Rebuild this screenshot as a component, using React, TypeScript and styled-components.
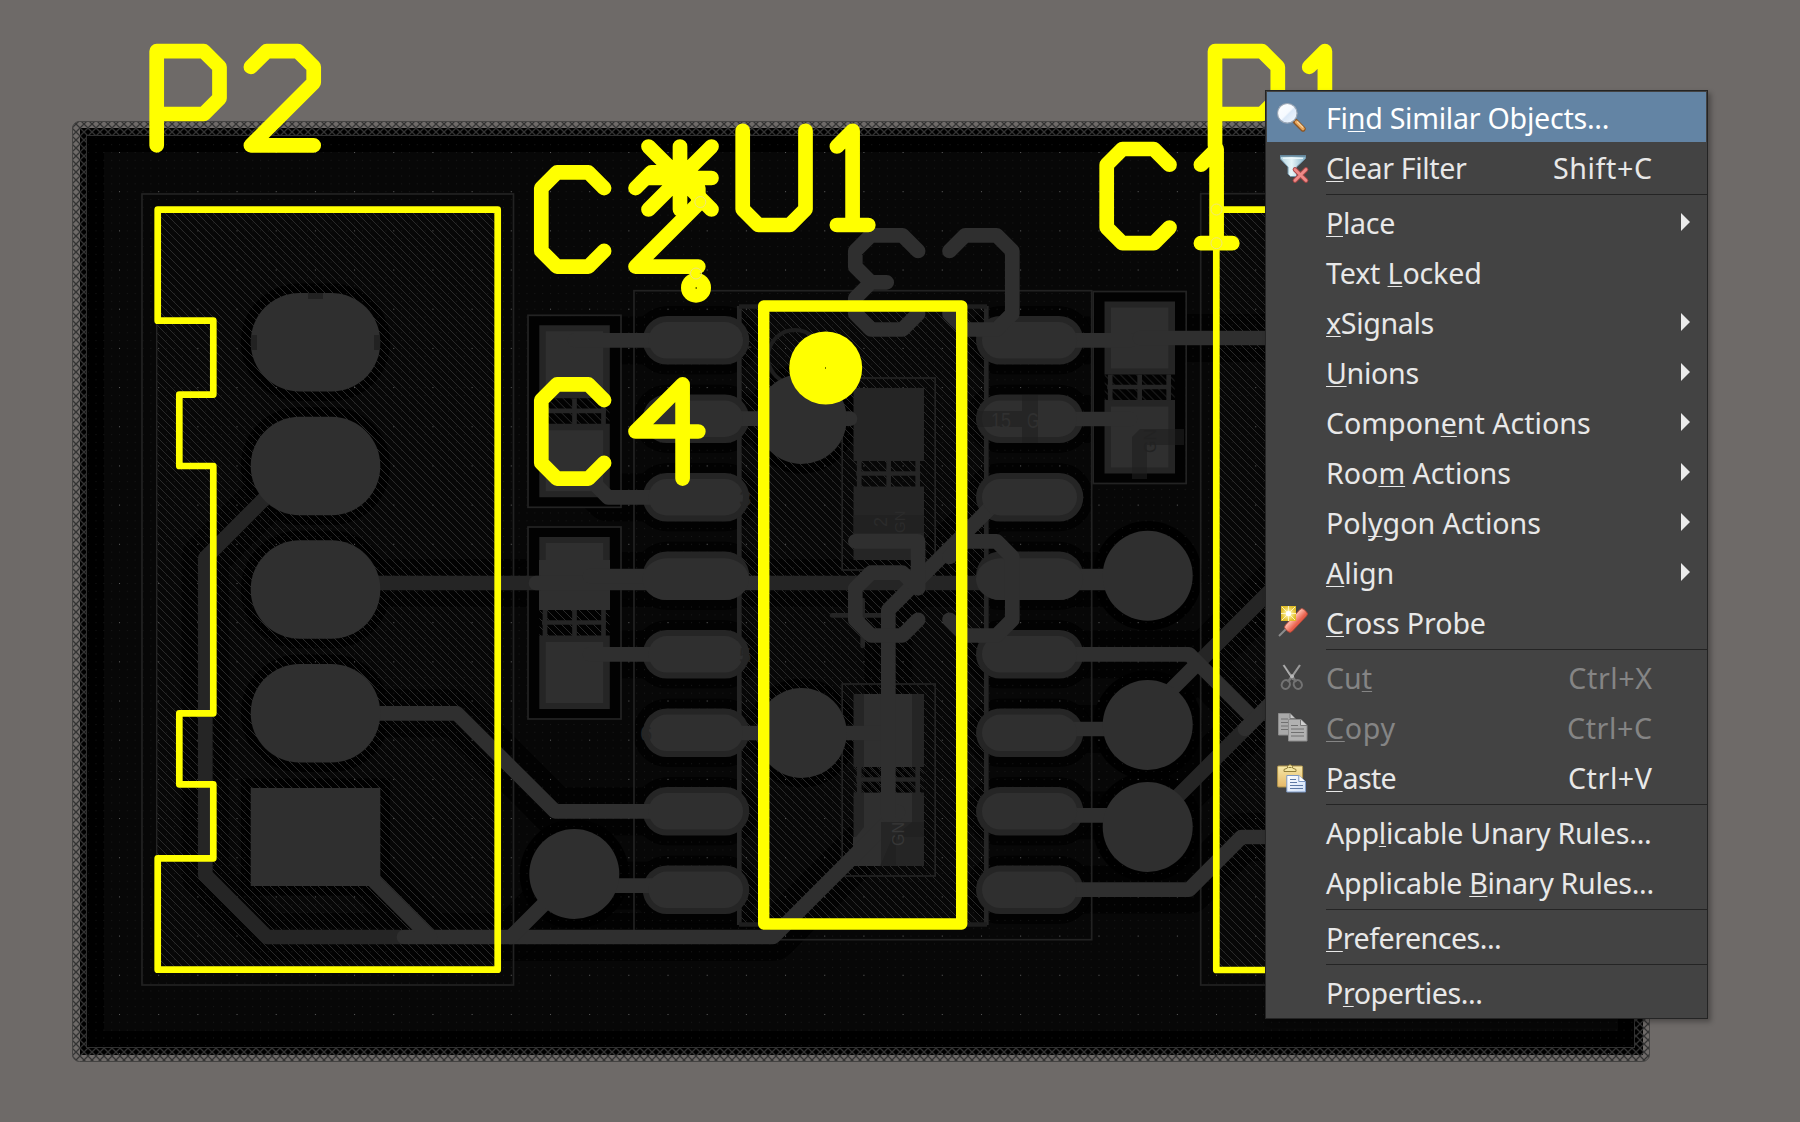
import React from "react";
import styled, { createGlobalStyle } from "styled-components";

const Global = createGlobalStyle`
  * { box-sizing: border-box; }
  body { margin: 0; background: #6e6a68; overflow: hidden; }
`;

const Screen = styled.main`
  position: relative;
  width: 1800px;
  height: 1122px;
  overflow: hidden;
  background: #6e6a68;
`;

const Board = styled.svg`
  display: block;
  width: 1800px;
  height: 1122px;
`;

const Menu = styled.ul`
  position: absolute;
  left: 1265px;
  top: 90px;
  width: 443px;
  margin: 0;
  padding: 1px 0;
  list-style: none;
  display: flex;
  flex-direction: column;
  background: #434343;
  border: 1px solid #242424;
  box-shadow: 3px 3px 5px rgba(0, 0, 0, 0.3);
  font-family: "Noto Sans", "Open Sans", sans-serif;
  font-size: 28.6px;
`;

const Row = styled.li<{ $active?: boolean; $disabled?: boolean }>`
  display: grid;
  grid-template-columns: 51px 1fr auto 54px;
  align-items: center;
  height: 50px;
  margin: 0 1px;
  padding-left: 8px;
  line-height: 50px;
  white-space: nowrap;
  color: ${(p) => (p.$active ? "#fff" : p.$disabled ? "#858585" : "#e8e8e8")};
  background: ${(p) => (p.$active ? "#6384a4" : "transparent")};
`;

const IconCell = styled.span`
  display: flex;
  align-items: center;
  height: 50px;
`;

const Glyph = styled.svg`
  width: 32px;
  height: 32px;
  overflow: visible;
`;

const Label = styled.span<{ $track: number }>`
  letter-spacing: ${(p) => p.$track}px;
  position: relative;
  top: 1px;
`;

const Key = styled.u`
  text-decoration: underline;
  text-decoration-thickness: 1px;
  text-underline-offset: 2px;
  text-decoration-skip-ink: none;
`;

const Shortcut = styled.span`
  position: relative;
  top: 1px;
  letter-spacing: 0.6px;
  margin-right: -0.6px;
`;

const Arrow = styled.span`
  grid-column: 4;
  justify-self: start;
  margin-left: 29px;
  border-left: 9px solid #ececec;
  border-top: 9px solid transparent;
  border-bottom: 9px solid transparent;
`;

const Divider = styled.li`
  height: 5px;
  margin-left: 60px;
  padding-top: 2px;
  &::before {
    content: "";
    display: block;
    height: 1px;
    background: #242424;
  }
`;

const Find = () => (
  <Glyph viewBox="0 0 32 32">
    <defs>
      <linearGradient id="lens" x1="0" y1="0" x2="1" y2="1">
        <stop offset="0" stopColor="#ffffff" />
        <stop offset=".5" stopColor="#f6faff" />
        <stop offset=".55" stopColor="#dce9f8" />
        <stop offset="1" stopColor="#f4f9ff" />
      </linearGradient>
    </defs>
    <path d="M20.5 20.5 28 28" stroke="#8a5524" strokeWidth="5.4" strokeLinecap="round" />
    <path d="M21.5 21 28 27.6" stroke="#e9a55a" strokeWidth="3.4" strokeLinecap="round" />
    <path d="m22 20.5 6 6" stroke="#f8d29c" strokeWidth="1.2" />
    <circle cx="12.3" cy="12.3" r="9.8" fill="url(#lens)" stroke="#9aa6b4" strokeWidth="1.2" />
  </Glyph>
);

const Filter = () => (
  <Glyph viewBox="0 0 32 32">
    <defs>
      <linearGradient id="funnel">
        <stop offset="0" stopColor="#b5d6e2" />
        <stop offset=".45" stopColor="#e6f5f8" />
        <stop offset="1" stopColor="#84b2c8" />
      </linearGradient>
    </defs>
    <path d="M5.5 4.5h25v3L21.5 16v9.5h-6l-2.5-2.5V16L5.5 8z" fill="url(#funnel)" stroke="#7295ab" />
    <path d="M5.5 5h25" stroke="#5f8298" strokeWidth="1.6" />
    <path d="M8 7.3h20" stroke="#eef9fb" strokeWidth="1.2" />
    <path d="m20 18.5 11 11m0-11-11 11" stroke="#a94747" strokeWidth="4.6" strokeLinecap="round" />
    <path d="m20 18.5 11 11m0-11-11 11" stroke="#ee8a88" strokeWidth="2.8" strokeLinecap="round" />
  </Glyph>
);

const Probe = () => (
  <Glyph viewBox="0 0 32 32">
    <defs>
      <linearGradient id="grip" x1="0" y1="0" x2="1" y2="0">
        <stop offset=".1" stopColor="#ffb8a8" />
        <stop offset=".8" stopColor="#e8604c" />
      </linearGradient>
      <radialGradient id="spark">
        <stop offset="0" stopColor="#fff" />
        <stop offset=".5" stopColor="#f6e27a" />
        <stop offset="1" stopColor="#e0bd28" />
      </radialGradient>
    </defs>
    <path d="m4 30 7-7" stroke="#8c8c8c" strokeWidth="2" />
    <rect x="-4.6" y="-13.5" width="9.2" height="27" rx="3" transform="translate(21 14.5) rotate(43)" fill="url(#grip)" stroke="#b04434" strokeWidth=".8" />
    <rect x="6" y="0" width="15" height="15" fill="url(#spark)" />
    <path d="M13.5 0v15M6 7.5h15M7 1l13 13M20 1 7 14" stroke="#fff8c8" strokeWidth=".9" />
    <circle cx="13.5" cy="7.5" r="2.6" fill="#fff" />
  </Glyph>
);

const Cut = () => (
  <Glyph viewBox="0 0 32 32" fill="none">
    <path d="M8.5 4 18.5 18.5M25 4 15 18.5" stroke="#999" strokeWidth="2.2" />
    <path d="m9 4.5 6 10" stroke="#bbb" strokeWidth=".8" />
    <path d="m17 15-4 6m4-6 4 6" stroke="#777" strokeWidth="2.5" />
    <ellipse cx="10.8" cy="23.5" rx="4" ry="4.5" stroke="#737373" strokeWidth="2" transform="rotate(25 10.8 23.5)" />
    <ellipse cx="22.8" cy="23.5" rx="4" ry="4.5" stroke="#737373" strokeWidth="2" transform="rotate(-25 22.8 23.5)" />
    <circle cx="17" cy="15.3" r="2" fill="#b8b8b8" />
  </Glyph>
);

const Copy = () => (
  <Glyph viewBox="0 0 32 32" strokeWidth="1">
    <path d="M3.500 2.500H15l5 5v16.500H3.500z" fill="#a9a9a9" stroke="#8c8c8c" />
    <path d="M15 2.500v5h5" fill="#c9c9c9" stroke="#777" />
    <path d="M6 8h7M6 11.500h8M6 15h8M6 18.500h8" stroke="#707070" />
    <path d="M13.500 8.500H26l6 6v15.500H13.500z" fill="#b1b1b1" stroke="#8c8c8c" />
    <path d="M25.500 8.500v6H32" fill="#d0d0d0" stroke="#777" />
    <path d="M16 14.500h7M16 18h13M16 21.500h13M16 25h13" stroke="#707070" />
  </Glyph>
);

const Paste = () => (
  <Glyph viewBox="0 0 32 32">
    <defs>
      <linearGradient id="clip" x2="0" y2="1">
        <stop offset="0" stopColor="#f6e8a8" />
        <stop offset="1" stopColor="#e6b868" />
      </linearGradient>
      <linearGradient id="sheet" x2="1" y2="1">
        <stop offset="0" stopColor="#fff" />
        <stop offset="1" stopColor="#cfe0f8" />
      </linearGradient>
    </defs>
    <rect x="2.6" y="5" width="25" height="21" rx="1" fill="url(#clip)" stroke="#b0944c" />
    <path d="M9 10.500v-2l3.500-1.500V5.500Q15 2 17.500 5.500V7L21 8.500v2z" fill="#f3e5a2" stroke="#94803c" />
    <path d="M13.500 6.500h3" stroke="#94803c" />
    <path d="M11.800 14.500h12l6.700 6v10.500H11.800z" fill="url(#sheet)" stroke="#7c98c4" />
    <path d="M23.800 14.500v6h6.500" fill="#fff" stroke="#7c98c4" />
    <path d="M15 18.500h6M15 21.500h7M15 24.500h13M15 27.500h13" stroke="#5f7aa5" />
  </Glyph>
);

type Entry =
  | "divider"
  | {
      label: [string, string, string];
      icon?: React.ReactNode;
      shortcut?: string;
      sub?: boolean;
      active?: boolean;
      disabled?: boolean;
      track?: number;
    };

const entries: Entry[] = [
  { label: ["Fi", "n", "d Similar Objects..."], icon: <Find />, active: true, track: -0.25 },
  { label: ["", "C", "lear Filter"], icon: <Filter />, shortcut: "Shift+C", track: -0.36 },
  "divider",
  { label: ["", "P", "lace"], sub: true, track: -0.3 },
  { label: ["Text ", "L", "ocked"], track: -0.16 },
  { label: ["", "x", "Signals"], sub: true, track: -0.35 },
  { label: ["", "U", "nions"], sub: true, track: -0.3 },
  { label: ["Compon", "e", "nt Actions"], sub: true },
  { label: ["Roo", "m", " Actions"], sub: true },
  { label: ["Pol", "y", "gon Actions"], sub: true },
  { label: ["", "A", "lign"], sub: true },
  { label: ["", "C", "ross Probe"], icon: <Probe />, track: -0.1 },
  "divider",
  { label: ["Cu", "t", ""], icon: <Cut />, shortcut: "Ctrl+X", disabled: true },
  { label: ["", "C", "opy"], icon: <Copy />, shortcut: "Ctrl+C", disabled: true, track: 0.7 },
  { label: ["", "P", "aste"], icon: <Paste />, shortcut: "Ctrl+V", track: -0.7 },
  "divider",
  { label: ["App", "l", "icable Unary Rules..."], track: -0.2 },
  { label: ["Applicable ", "B", "inary Rules..."], track: -0.3 },
  "divider",
  { label: ["", "P", "references..."], track: -0.5 },
  "divider",
  { label: ["P", "r", "operties..."], track: -0.42 },
];

const HI = "#2f2f2f";
const LO = "#252525";
const U = 15.7;

/* Stroke font on a 4 x 6 grid */
const font: Record<string, string> = {
  P: "M0 6V0H3L4 1V3L3 4H0",
  "1": "M0 1L1 0V6M0 6H2",
  "2": "M0 1L1 0H3L4 1V2L0 6H4",
  "3": "M0 1L1 0H3L4 1V2L3 3H2M3 3L4 4V5L3 6H1L0 5",
  "4": "M3 6V0L0 3H4",
  "5": "M4 0H0V3L1 2H3L4 3V5L3 6H1L0 5",
  C: "M4 1L3 0H1L0 1V5L1 6H3L4 5",
  U: "M0 0V5L1 6H3L4 5V0",
};

const Designator = ({ text, x, y, mirror, color = "#ff0" }: { text: string; x: number; y: number; mirror?: boolean; color?: string }) => (
  <g
    transform={`translate(${x} ${y}) scale(${mirror ? -U : U} ${U})`}
    fill="none"
    stroke={color}
    strokeWidth={14.7 / U}
    strokeLinecap="round"
    strokeLinejoin="round"
  >
    {[...text].map((c, i) => (
      <path key={i} d={font[c]} transform={`translate(${i * 6} 0)`} />
    ))}
  </g>
);

const tracks: [string, string, number?][] = [
  ["M268 495L205.300 558V875L267 937H400", LO],
  ["M404 937H773L898 812", HI],
  ["M371 878L430 937", HI],
  ["M511 937L574 874", HI],
  ["M340 713.300H456.700L555 811.300H660", HI],
  ["M574 885.700H670", HI],
  ["M340 583H540", LO],
  ["M536 583H770", HI],
  ["M590 576H680", HI],
  ["M765 583H1000", LO],
  ["M575 340.300H670", HI],
  ["M585 474L608 497.300H670", HI],
  ["M590 654.300H670", HI],
  ["M720 418.700H850", HI],
  ["M720 733H888", HI],
  ["M888.300 815V610L1000 498", HI],
  ["M1040 340.300H1130", HI],
  ["M1140 338H1300", HI],
  ["M1040 419H1130", HI],
  ["M1050 579.500H1147", HI, 21.5],
  ["M1197 664L1300 561", LO],
  ["M1147 714L1197 664", HI],
  ["M1050 654.300H1189L1250 715.300", HI],
  ["M1150 824L1245 729", LO],
  ["M1245 729L1290 684", HI],
  ["M1050 729H1147", HI],
  ["M1050 815.300H1147", HI],
  ["M1050 889.700H1189L1241.500 837H1300", HI],
];

const circles: [number, number][] = [
  [574.3, 874],
  [801.7, 419],
  [801.7, 733],
  [1147.7, 575.7],
  [1147.7, 725],
  [1147.7, 827],
];

const pinY = [340.3, 418.7, 497.2, 575.8, 654.3, 732.8, 811.3, 889.8];
const headerY = [293, 416.8, 540.3, 664];

const Cap = ({ x, y, buried }: { x: number; y: number; buried?: boolean }) => (
  <g transform={`translate(${x} ${y})`}>
    {!buried && <rect x="1" y="1" width="91" height="190" fill="#020202" />}
    <rect x="11.500" y="83" width="70" height="26" fill="url(#hatch)" />
    <rect width="93" height="192" fill="none" stroke="#232323" strokeWidth="1.700" />
    <path d="M11.300 10h70.500v73h-70.500zM11.300 108.500h70.500v73.500h-70.500z" fill={LO} />
    <path d="M17 83v26M46.500 83v26M75.500 83v26M14 95.500h64" stroke={LO} strokeWidth="4.700" />
    {!buried && <path d="M17.700 16h57.500v61h-57.500zM17.700 115h57.500v61h-57.500z" fill={HI} />}
  </g>
);

const Layout = () => (
  <Board viewBox="0 0 1800 1122">
    <defs>
      <pattern id="hatch" width="8" height="8" patternUnits="userSpaceOnUse">
        <path d="M-1-1 9 9M-1 7 1 9M7-1 9 1" stroke="#2a2a2a" strokeWidth="1" />
      </pattern>
      <pattern id="mesh" width="8" height="8" patternUnits="userSpaceOnUse">
        <path d="M-1-1 9 9M9-1-1 9" stroke="#333" strokeWidth="1.300" />
      </pattern>
      <pattern id="minor" x="119" y="152" width="7.836" height="7.836" patternUnits="userSpaceOnUse">
        <rect width="1" height="1" fill="#181818" />
      </pattern>
      <pattern id="major" x="119" y="152" width="39.180" height="39.180" patternUnits="userSpaceOnUse">
        <rect width="1" height="1" fill="#5a5a5a" />
      </pattern>
    </defs>

    <rect x="80" y="128" width="1563" height="927" fill="#000" />
    <path d="M80 121H1642a8 8 0 0 1 8 8V1053.500a8 8 0 0 1-8 8H80a8 8 0 0 1-8-8V129a8 8 0 0 1 8-8ZM86.500 136V1047H1634V136Z" fillRule="evenodd" fill="url(#mesh)" />
    <rect x="72.500" y="121.500" width="1577" height="940" rx="7" fill="none" stroke="#444342" />
    <rect x="86.500" y="135.500" width="1548" height="912" fill="none" stroke="#303030" />
    <rect x="104" y="152" width="1514" height="879" fill="#070707" />

    <g fill="none" stroke="#020202" strokeLinecap="round" strokeLinejoin="round">
      {tracks.map(([d, , w = 14.7], i) => (
        <path key={i} d={d} strokeWidth={w + 33} />
      ))}
    </g>
    <g fill="#000">
      {circles.map(([x, y], i) => (
        <circle key={i} cx={x} cy={y} r="54.600" />
      ))}
      {headerY.map((y) => (
        <rect key={y} x="241" y={y - 9.5} width="149" height="117.500" rx="58" />
      ))}
      <rect x="241" y="778.500" width="149" height="117" />
    </g>
    <g fill="#020202">
      {pinY.flatMap((y) => [
        <rect key={`l${y}`} x="633" y={y - 34} width="126" height="68" rx="34" />,
        <rect key={`r${y}`} x="966" y={y - 34} width="127" height="68" rx="34" />,
      ])}
    </g>
    <rect x="88" y="137" width="1545" height="909" fill="url(#minor)" />

    <rect x="157" y="210" width="341" height="760" fill="url(#hatch)" />
    <rect x="1216" y="210" width="80" height="760" fill="url(#hatch)" />
    <rect x="741" y="308" width="244" height="615" fill="url(#hatch)" />
    <path d="M156.700 321V858" stroke="#242424" strokeWidth="1.500" />
    <g fill="none" stroke="#222" strokeWidth="1.700">
      <rect x="142" y="194" width="371.500" height="791" />
      <rect x="1200.700" y="193.700" width="340" height="791.300" />
      <rect x="634" y="290.700" width="457.700" height="649" />
    </g>
    <g fill="none" stroke={LO} strokeWidth="4.700">
      <path d="M739.300 306V925M986.300 306V925" />
      <path d="M739 306.500H987M739 924.500H987" stroke="#1e1e1e" />
      <circle cx="795" cy="357" r="27" stroke="#1e1e1e" strokeWidth="4" />
      <path d="M832 615.300H890M862.700 600V646" strokeLinecap="round" />
    </g>
    <rect x="88" y="137" width="1545" height="920" fill="url(#major)" />

    <Cap x={528} y={315.3} />
    <Cap x={528} y={527} />
    <Cap x={1093.2} y={291.5} />
    <Cap x={842.2} y={378} buried />
    <Cap x={842.2} y={684} buried />
    <path d="M864 694h48v73h-48zM864 793h48v29l-20 16-12 28h-27v-29h3l8-10z" fill={HI} />
    <path d="M539 560h71v50h-71z" fill={HI} />

    <g>
      {pinY.flatMap((y) => [
        <rect key={`l${y}`} x="642.700" y={y - 24.3} width="106.600" height="48.600" rx="24.300" fill={LO} />,
        <rect key={`r${y}`} x="976" y={y - 24.3} width="107.300" height="48.600" rx="24.300" fill={LO} />,
      ])}
    </g>
    <g fill="none" strokeLinecap="round" strokeLinejoin="round">
      {tracks.map(([d, c, w = 14.7], i) => (
        <path key={i} d={d} stroke={c} strokeWidth={w} />
      ))}
    </g>
    <g fill={HI}>
      {pinY.flatMap((y, i) => {
        const merged = i === 3;
        const up = merged ? 17.5 : 18.3;
        const down = merged ? 24.3 : 18.3;
        const g = merged ? 6 : 0;
        return [
          <rect key={`l${y}`} x={648.5 - g} y={y - up} width={94.5 + 2 * g} height={up + down} rx={down} />,
          <rect key={`r${y}`} x={982 - g} y={y - up} width={95 + 2 * g} height={up + down} rx={down} />,
        ];
      })}
      {circles.map(([x, y], i) => (
        <circle key={i} cx={x} cy={y} r="45" />
      ))}
      {headerY.map((y) => (
        <rect key={y} x="250.700" y={y} width="129.600" height="98.500" rx="49" />
      ))}
      <rect x="250.700" y="788" width="129.600" height="98" />
    </g>
    <path d="M308 293h15v6h-15zM251 335h6v15h-6zM374 335h6v15h-6z" fill="#222" />

    <g fill="#1f1f1f" opacity=".6">
      <path d="M977 411h45v-16h16v48h-16v-16h-45z" />
      <path d="M1140 429h44v16h-37v34h-15v-42z" />
      <path d="M853.300 515h70.500v18h-70.500z" />
      <path d="M881 822h43v15h-28v29h-15z" />
    </g>
    <g fill="#303030" fontFamily="Liberation Sans, sans-serif" fontSize="22">
      <text x="991" y="428" textLength="20" lengthAdjust="spacingAndGlyphs">15</text>
      <text x="1027" y="428" textLength="12" lengthAdjust="spacingAndGlyphs">G</text>
      <text transform="translate(887 527) rotate(-90)" fontSize="18" fill="#2b2b2b">2</text>
      <text transform="translate(905 533) rotate(-90)" fontSize="15" fill="#2b2b2b">GN</text>
      <text transform="translate(904 846) rotate(-90)" fontSize="16" fill="#373737">GN</text>
      <text transform="translate(1156 453) rotate(-90)" fontSize="16" fill="#222">GN</text>
    </g>
    <g fill={LO} fontFamily="Liberation Sans, sans-serif" fontSize="22">
      <text x="740" y="348">1</text>
      <text x="739" y="506">3</text>
      <text x="739" y="663">5</text>
      <text x="640" y="741">6</text>
    </g>

    <Designator text="C3" x={1012.3} y={235.3} mirror color={HI} />
    <Designator text="C5" x={1012.3} y={541.3} mirror color={HI} />

    <g fill="none" stroke="#ff0" strokeWidth="6.700" strokeLinejoin="round">
      <path d="M157.700 209.600H497.700V969.700H157.700V858.300H213.300V784.300H179.300V713.300H213.300V466H179.300V394.600H213.300V320.700H157.700Z" />
      <path d="M1300 209.600H1216.300V970H1300" />
      <rect x="763.700" y="306" width="198" height="618" strokeWidth="11.400" />
    </g>
    <Designator text="P2" x={156.7} y={51.2} />
    <Designator text="P1" x={1215} y={51.2} />
    <Designator text="C2" x={541.3} y={172.4} />
    <Designator text="C4" x={541.3} y={384.4} />
    <Designator text="U1" x={742.7} y={130.8} />
    <Designator text="C1" x={1106.7} y={149} />
    <path d="M680 146.500v63M648.500 178h63M648.500 146.500l63 63M711.500 146.500l-63 63" stroke="#ff0" strokeWidth="14.700" strokeLinecap="round" />
    <circle cx="696" cy="287.700" r="15" fill="#ff0" />
    <circle cx="825.700" cy="368" r="36.500" fill="#ff0" />
    <path d="M695.500 287h1.500v2h-1.500zM825 367h1v2h-1z" fill="#777700" />
    <g fill="none" stroke="#f0e678" strokeWidth="1">
      <circle cx="700.300" cy="202" r="5.500" />
      <circle cx="696" cy="273.500" r="5.500" />
      <circle cx="1216.500" cy="209.500" r="5.500" />
      <circle cx="1216.500" cy="243.200" r="5.500" />
    </g>
  </Board>
);

export default function App() {
  return (
    <Screen>
      <Global />
      <Layout />
      <Menu>
        {entries.map((e, i) =>
          e === "divider" ? (
            <Divider key={i} />
          ) : (
            <Row key={i} $active={e.active} $disabled={e.disabled}>
              <IconCell>{e.icon}</IconCell>
              <Label $track={e.track ?? 0}>
                {e.label[0]}
                <Key>{e.label[1]}</Key>
                {e.label[2]}
              </Label>
              {e.shortcut && <Shortcut>{e.shortcut}</Shortcut>}
              {e.sub && <Arrow />}
            </Row>
          )
        )}
      </Menu>
    </Screen>
  );
}
